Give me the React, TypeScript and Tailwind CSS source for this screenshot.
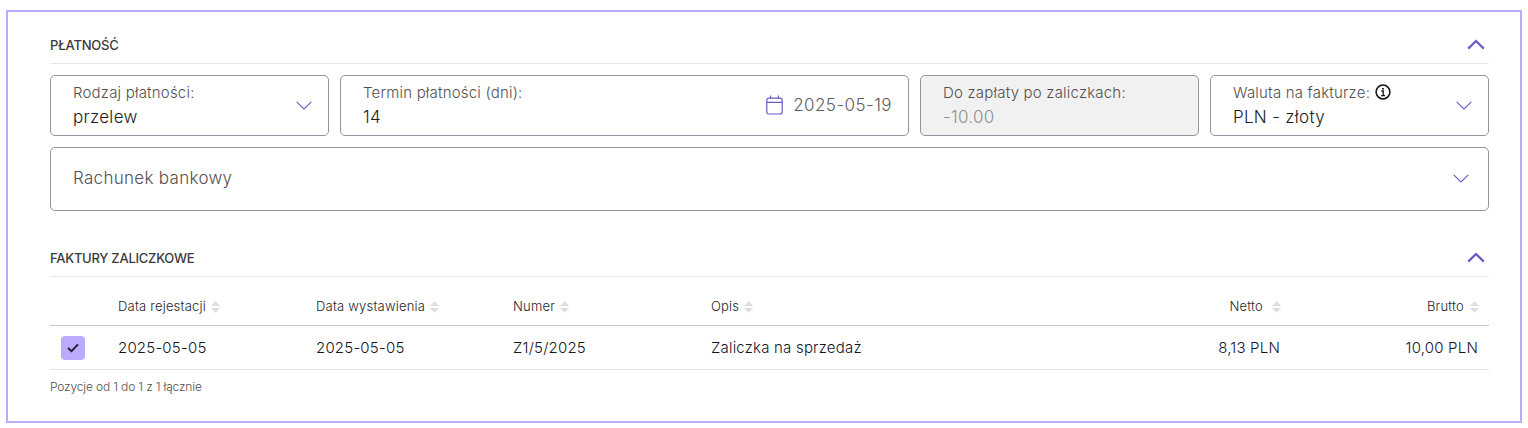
import React from "react";

const purple = "#6b5bc4";

function Chevron({ className = "" }: { className?: string }) {
  return (
    <svg width="16" height="9" viewBox="0 0 16 9" fill="none" className={className}>
      <path d="M0.7 0.8 L8 8 L15.3 0.8" stroke={purple} strokeWidth="1.1" />
    </svg>
  );
}

function ChevronUp() {
  return (
    <svg width="18" height="11" viewBox="0 0 18 11" fill="none">
      <path d="M1.2 9.6 L9 2 L16.8 9.6" stroke={purple} strokeWidth="2.3" />
    </svg>
  );
}

function Sort() {
  return (
    <svg width="9" height="12" viewBox="0 0 9 12" className="shrink-0">
      <path d="M4.5 0 L9 5 H0 Z" fill="#dedede" />
      <path d="M4.5 12 L9 7 H0 Z" fill="#dedede" />
    </svg>
  );
}

function SectionHead({ title }: { title: string }) {
  return (
    <div className="flex h-[29px] items-start justify-between border-b border-[#e8e8e8] pr-[4px]">
      <span className="mt-[1px] text-[13px] font-medium leading-[18px] tracking-[-0.25px] text-[#3a3a3a]">{title}</span>
      <span className="mt-[4px] flex"><ChevronUp /></span>
    </div>
  );
}

function Field({ label, value, width, children }: { label: React.ReactNode; value: string; width: string; children?: React.ReactNode }) {
  return (
    <div className={`relative flex h-[61px] flex-col rounded-[5px] border border-[#96929f] pl-[22px] pt-[8px] ${width}`}>
      <div className="text-[15px] font-light leading-[18px] tracking-[0.2px] text-[#55504f]">{label}</div>
      <div className="mt-[3px] text-[17px] font-light leading-[24px] tracking-[0.3px] text-[#1c1c1c]">{value}</div>
      {children}
    </div>
  );
}

function Th({ children, className = "" }: { children: React.ReactNode; className?: string }) {
  return <div className={`flex items-center gap-[5px] ${className}`}>{children}</div>;
}

export default function App() {
  return (
    <div className="h-[428px] bg-white pl-[6px] pr-[6px] pt-[10px] font-['Inter',sans-serif]">
      <div className="h-[413px] w-[1516px] border-2 border-[#bcaaff] pl-[42px] pr-[31px] pt-[23px]">
        <SectionHead title="PŁATNOŚĆ" />

        <div className="mt-[11px] flex gap-[11px]">
          <Field label="Rodzaj płatności:" value="przelew" width="w-[279px]">
            <Chevron className="absolute right-[16px] top-[25px]" />
          </Field>
          <Field label="Termin płatności (dni):" value="14" width="w-[569px]">
            <div className="absolute right-[16px] top-[17px] flex items-center gap-[10px]">
              <svg width="17" height="20" viewBox="0 0 17 20" fill="none" stroke={purple} strokeWidth="1.2">
                <rect x="0.8" y="3.2" width="15.4" height="15.8" rx="2" />
                <path d="M0.8 7.4 H16.2 M4.6 0.6 V4 M12.4 0.6 V4" />
              </svg>
              <span className="text-[17px] font-light leading-[24px] tracking-[0.45px] text-[#5d5d5d]">2025-05-19</span>
            </div>
          </Field>
          <div className="flex h-[61px] w-[279px] flex-col rounded-[5px] border border-[#96929f] bg-[#f1f1f1] pl-[22px] pt-[8px]">
            <div className="text-[15px] font-light leading-[18px] tracking-[0.2px] text-[#55504f]">Do zapłaty po zaliczkach:</div>
            <div className="mt-[3px] text-[17px] font-light leading-[24px] tracking-[0.3px] text-[#8f8f8f]">-10.00</div>
          </div>
          <Field
            label={
              <span className="flex items-center gap-[5px]">
                Waluta na fakturze:
                <svg width="16" height="16" viewBox="0 0 16 16" fill="none" stroke="#111" strokeWidth="1.5" className="-mt-[2px]">
                  <circle cx="8" cy="8" r="6.9" />
                  <path d="M6.4 7 H8.2 V11.6 M6.2 11.6 H10" strokeWidth="1.3" />
                  <path d="M8 4 V5.6" strokeWidth="1.8" />
                </svg>
              </span>
            }
            value="PLN - złoty"
            width="w-[279px]"
          >
            <Chevron className="absolute right-[16px] top-[25px]" />
          </Field>
        </div>

        <div className="relative mt-[11px] flex h-[64px] items-center rounded-[5px] border border-[#96929f] pl-[22px]">
          <span className="text-[17px] font-light tracking-[0.3px] text-[#55504f]">Rachunek bankowy</span>
          <Chevron className="absolute right-[19px] top-[26px]" />
        </div>

        <div className="mt-[37px]">
          <SectionHead title="FAKTURY ZALICZKOWE" />
        </div>

        <div className="grid h-[49px] grid-cols-[68px_198px_197px_198px_1fr_200px_208px] items-center border-b border-[#c8c8c8] pt-[11px] text-[13px] font-light tracking-[0.2px] text-[#1f1f2b]">
          <div />
          <Th>Data rejestacji <Sort /></Th>
          <Th>Data wystawienia <Sort /></Th>
          <Th>Numer <Sort /></Th>
          <Th>Opis <Sort /></Th>
          <Th className="justify-end gap-[9px]">Netto <Sort /></Th>
          <Th className="justify-end gap-[6px] pr-[10px]">Brutto <Sort /></Th>
        </div>

        <div className="grid h-[44px] grid-cols-[68px_198px_197px_198px_1fr_200px_208px] items-center border-b border-[#e4e4e4] pt-[1px] text-[15px] font-light tracking-[0.2px] text-[#15151f]">
          <div className="flex pl-[11px]">
            <span className="flex h-[24px] w-[24px] items-center justify-center rounded-[4px] bg-[#bcaaff]">
              <svg width="12" height="10" viewBox="0 0 12 10" fill="none">
                <path d="M1 5 L4.5 8.2 L11 1.4" stroke="#1d1b30" strokeWidth="1.8" />
              </svg>
            </span>
          </div>
          <div>2025-05-05</div>
          <div>2025-05-05</div>
          <div>Z1/5/2025</div>
          <div>Zaliczka na sprzedaż</div>
          <div className="pr-[1px] text-right">8,13 PLN</div>
          <div className="pr-[11px] text-right">10,00 PLN</div>
        </div>

        <div className="mt-[8px] text-[12px] font-light leading-[18px] tracking-[-0.15px] text-[#55504f]">Pozycje od 1 do 1 z 1 łącznie</div>
      </div>
    </div>
  );
}
